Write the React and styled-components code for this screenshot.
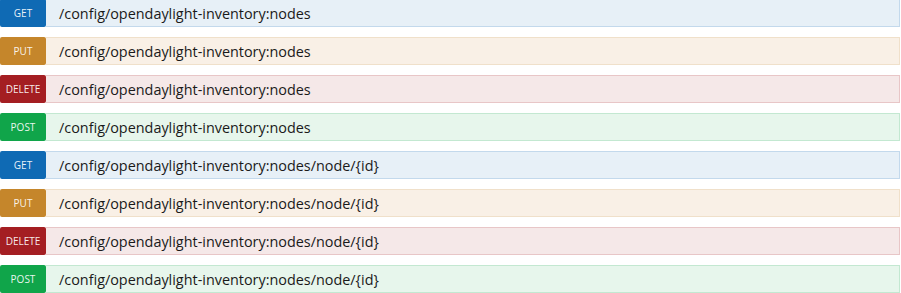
import styled, { createGlobalStyle } from "styled-components";

const GlobalStyle = createGlobalStyle`
  body {
    margin: 0;
    background: #fff;
    font-family: "Open Sans", "Noto Sans", sans-serif;
  }
`;

const methods = {
  get: { badge: "#0f6ab4", bg: "#e7f0f7", border: "#c3d9ec" },
  put: { badge: "#c5862b", bg: "#f9f0e6", border: "#f0e0ca" },
  delete: { badge: "#a41e22", bg: "#f5e8e8", border: "#e8c6c7" },
  post: { badge: "#10a54a", bg: "#e7f6ec", border: "#c3e8d1" },
};

const List = styled.div`
  display: flex;
  flex-direction: column;
  gap: 10px;
  margin-top: -1px;
  padding-right: 1px;
`;

const Row = styled.div`
  display: flex;
  align-items: stretch;
  height: 28px;
`;

const Badge = styled.span`
  width: 46px;
  flex: none;
  display: flex;
  align-items: center;
  justify-content: center;
  background: ${(p) => methods[p.method].badge};
  color: rgba(255, 255, 255, 0.92);
  font-size: 10px;
  text-transform: uppercase;
  border-radius: 2px;
`;

const Path = styled.div`
  flex: 1;
  display: flex;
  align-items: center;
  padding-left: 13px;
  background: ${(p) => methods[p.method].bg};
  border: 1px solid ${(p) => methods[p.method].border};
  border-left: none;
  color: #1a1a1a;
  font-size: 14.4px;
`;

const endpoints = [
  ["get", "/config/opendaylight-inventory:nodes"],
  ["put", "/config/opendaylight-inventory:nodes"],
  ["delete", "/config/opendaylight-inventory:nodes"],
  ["post", "/config/opendaylight-inventory:nodes"],
  ["get", "/config/opendaylight-inventory:nodes/node/{id}"],
  ["put", "/config/opendaylight-inventory:nodes/node/{id}"],
  ["delete", "/config/opendaylight-inventory:nodes/node/{id}"],
  ["post", "/config/opendaylight-inventory:nodes/node/{id}"],
];

export default function App() {
  return (
    <>
      <GlobalStyle />
      <List>
        {endpoints.map(([method, path], i) => (
          <Row key={i}>
            <Badge method={method}>{method}</Badge>
            <Path method={method}>{path}</Path>
          </Row>
        ))}
      </List>
    </>
  );
}
